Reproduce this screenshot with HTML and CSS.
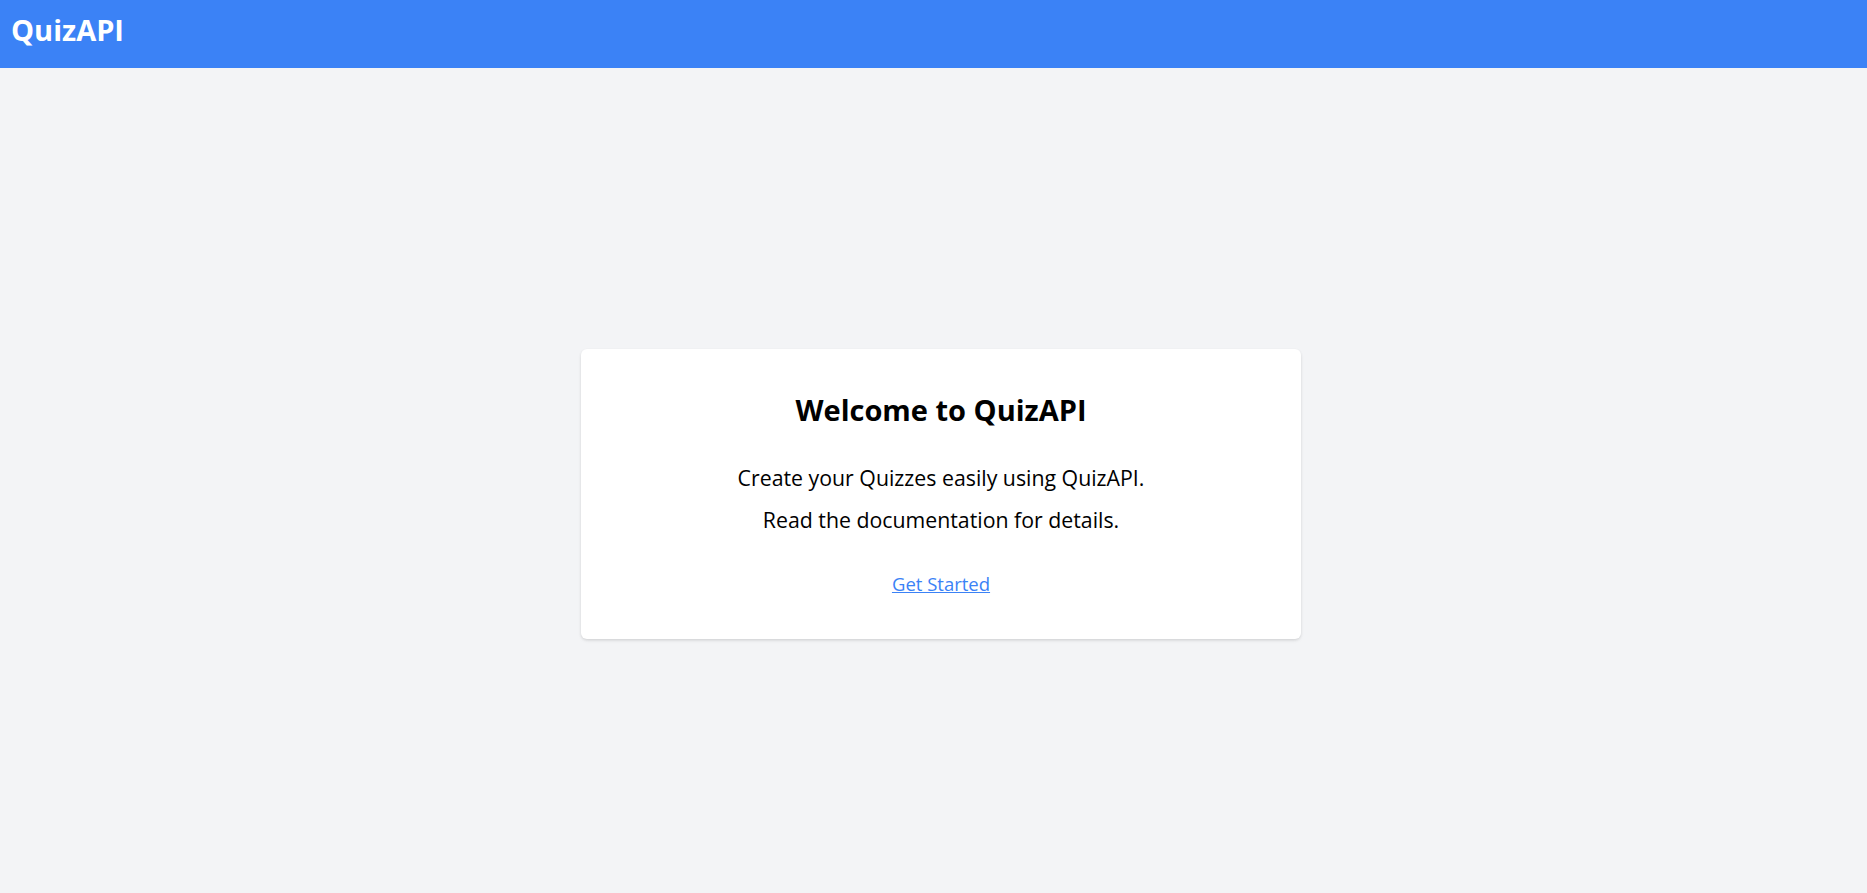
FILE: index.html
```html
<!DOCTYPE html>
<html lang="en">
<head>
<meta charset="utf-8">
<title>QuizAPI</title>
<link rel="stylesheet" href="styles.css">
</head>
<body>
<header class="topbar">
  <h1 class="brand">QuizAPI</h1>
</header>
<main class="main">
  <section class="card">
    <h2 class="card-title">Welcome to QuizAPI</h2>
    <p class="card-text">Create your Quizzes easily using QuizAPI.</p>
    <p class="card-text second">Read the documentation for details.</p>
    <a class="card-link" href="#">Get Started</a>
  </section>
</main>
</body>
</html>
```

FILE: styles.css
```css
html, body {
  margin: 0;
  padding: 0;
}
body {
  background: #f3f4f6;
  font-family: "Open Sans", "Noto Sans", sans-serif;
  color: #000;
  min-height: 893px;
}
.topbar {
  background: #3b82f6;
  height: 68px;
  box-sizing: border-box;
  padding: 12px 11px 0;
  display: flex;
  align-items: flex-start;
}
.brand {
  margin: 0;
  color: #fff;
  font-size: 29px;
  font-weight: 700;
  line-height: 36px;
}
.main {
  min-height: 825px;
  box-sizing: border-box;
  padding: 26px 0 0 15px;
  display: flex;
  align-items: center;
  justify-content: center;
}
.card {
  width: 720px;
  height: 290px;
  box-sizing: border-box;
  background: #fff;
  border-radius: 6px;
  box-shadow: 0 2px 4px -1px rgba(0,0,0,0.1), 0 1px 3px rgba(0,0,0,0.08);
  padding: 43px 32px 0;
  display: flex;
  flex-direction: column;
  align-items: center;
  text-align: center;
}
.card-title {
  margin: 0 0 36px;
  font-size: 29px;
  line-height: 36px;
  font-weight: 700;
}
.card-text {
  margin: 0;
  font-size: 21.3px;
  line-height: 28px;
}
.card-text.second {
  margin-top: 14px;
}
.card-link {
  margin-top: 38px;
  font-size: 18.5px;
  line-height: 24px;
  color: #3b82f6;
  text-decoration: underline;
}
```
